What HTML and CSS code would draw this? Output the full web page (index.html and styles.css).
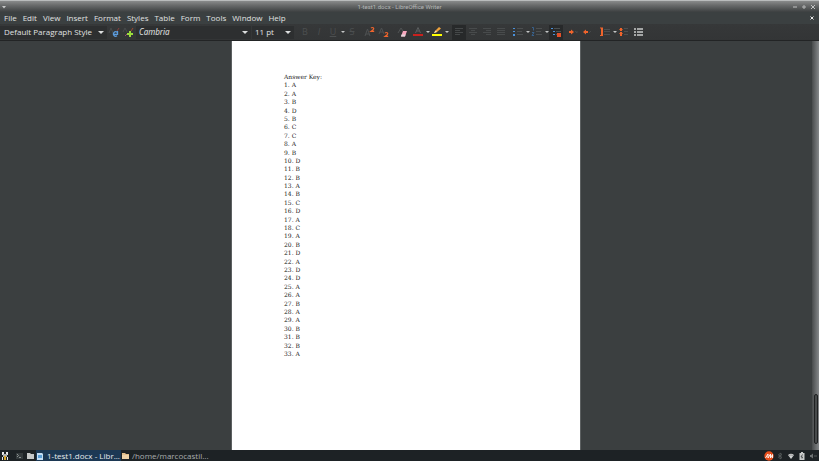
FILE: index.html
```
<!DOCTYPE html>
<html lang="en">
<head>
<meta charset="utf-8">
<title>1-test1.docx - LibreOffice Writer</title>
<link rel="stylesheet" href="styles.css">
</head>
<body>
<header class="titlebar">
  <button class="win" aria-label="Window menu"><svg width="6" height="6" viewBox="0 0 6 6"><path d="M1 2h4L3 4.500z" fill="#c8caca"/></svg></button>
  <h1 class="title">1-test1.docx - LibreOffice Writer</h1>
  <div class="win-group">
    <button class="win" aria-label="Minimize"><svg width="6" height="6" viewBox="0 0 6 6"><path d="M1 3h4" stroke="#c0c2c2"/></svg></button>
    <button class="win" aria-label="Maximize"><svg width="6" height="6" viewBox="0 0 6 6"><path d="M1 3h4M3 1v4" stroke="#b4b6b6"/></svg></button>
    <button class="win" aria-label="Close"><svg width="6" height="6" viewBox="0 0 6 6"><path d="M1 1l4 4M5 1L1 5" stroke="#c0c2c2"/></svg></button>
  </div>
</header>
<nav class="menubar">
  <button>File</button><button>Edit</button><button>View</button><button>Insert</button><button>Format</button><button>Styles</button><button>Table</button><button>Form</button><button>Tools</button><button>Window</button><button>Help</button>
  <button class="doc-close" aria-label="Close document"><svg width="4" height="4" viewBox="0 0 4 4"><path d="M.5.5l3 3M3.500.5l-3 3" stroke="#e8e8e8"/></svg></button>
</nav>
<div class="toolbar" role="toolbar" aria-label="Formatting">
  <div class="combo combo-style"><select aria-label="Paragraph style"><option>Default Paragraph Style</option></select></div>
  <div class="group">
    <button class="tool" aria-label="Update style"><svg width="12" height="12" viewBox="0 0 12 12"><path d="M1 7l2-5 2 5" stroke="#484b4c" fill="none"/><path d="M11 2L9 5" stroke="#8a3f3a"/><path d="M9 6.300A2.200 2.200 0 1 0 9 9.700M5.500 8.300h4V5" stroke="#5b9bdc" stroke-width="1.300" fill="none"/></svg></button>
    <button class="tool" aria-label="New style"><svg width="12" height="12" viewBox="0 0 12 12"><path d="M1 6l2-4 2 4" stroke="#484b4c" fill="none"/><path d="M11 2L9 5" stroke="#a04a2f"/><path d="M3 10l2-2" stroke="#9b4b78"/><path d="M7 5h2v2h2v2H9v2H7V9H5V7h2z" fill="#9adb3c"/></svg></button>
  </div>
  <div class="combo combo-font"><select aria-label="Font name"><option>Cambria</option></select></div>
  <div class="combo combo-size"><select aria-label="Font size"><option>11 pt</option></select></div>
  <div class="group group-text">
    <button class="tool letter bold" aria-label="Bold">B</button>
    <button class="tool letter italic" aria-label="Italic">I</button>
    <button class="tool letter under" aria-label="Underline">U</button>
    <button class="drop" aria-label="Underline options"></button>
    <button class="tool letter strike" aria-label="Strikethrough">S</button>
  </div>
  <div class="group group-script">
    <button class="tool" aria-label="Superscript"><svg width="12" height="12" viewBox="0 0 12 12"><path d="M1 10l2.500-7L6 10M2 8h3" stroke="#4e5152" fill="none"/><path d="M7 2q1.500-1 2.500 0T7.200 5.300h3" stroke="#f0642c" stroke-width="1.200" fill="none"/></svg></button>
    <button class="tool" aria-label="Subscript"><svg width="12" height="12" viewBox="0 0 12 12"><path d="M1 8l2.500-6L6 8M2 6h3" stroke="#4e5152" fill="none"/><path d="M7 7q1.500-1 2.500 0t-2.300 3.300h3" stroke="#f0642c" stroke-width="1.200" fill="none"/></svg></button>
  </div>
  <div class="group group-clear">
    <button class="tool" aria-label="Clear formatting"><svg width="12" height="12" viewBox="0 0 12 12"><path d="M1 7l3-5 2 3" stroke="#505354" fill="none"/><path d="M6 5h4L8 10.500H4z" fill="#f7a6bd"/><path d="M4.500 8.500H8.500L8 10.500H4z" fill="#e3d5dc"/></svg></button>
  </div>
  <div class="group group-color">
    <button class="tool" aria-label="Font color"><svg width="12" height="12" viewBox="0 0 12 12"><path d="M3.500 7L6 1.500 8.500 7M4.500 5h3" stroke="#5c5f60" fill="none"/><path d="M1 8h10v2H1z" fill="#c9211e"/></svg></button>
    <button class="drop" aria-label="Font color options"></button>
    <button class="tool" aria-label="Highlighting"><svg width="12" height="12" viewBox="0 0 12 12"><path d="M3 7l1-2 4-4 2 1.500L6 6z" fill="#f0a33c"/><path d="M3 7l1.500-2.500L6 6z" fill="#f6e3b0"/><path d="M1 8h10v2H1z" fill="#ffff00"/></svg></button>
    <button class="drop" aria-label="Highlighting options"></button>
  </div>
  <div class="group group-align">
    <button class="tool pressed" aria-label="Align left"><svg width="12" height="12" viewBox="0 0 12 12"><path d="M2 2.500h8M2 4.500h5M2 6.500h8M2 8.500h5" stroke="#454849"/></svg></button>
    <button class="tool" aria-label="Align center"><svg width="12" height="12" viewBox="0 0 12 12"><path d="M2 2.500h8M4 4.500h4M2 6.500h8M4 8.500h4" stroke="#484b4c"/></svg></button>
    <button class="tool" aria-label="Align right"><svg width="12" height="12" viewBox="0 0 12 12"><path d="M2 2.500h8M5 4.500h5M2 6.500h8M5 8.500h5" stroke="#484b4c"/></svg></button>
    <button class="tool" aria-label="Justify"><svg width="12" height="12" viewBox="0 0 12 12"><path d="M2 2.500h8M2 4.500h8M2 6.500h8M2 8.500h8" stroke="#484b4c"/></svg></button>
  </div>
  <div class="group group-list">
    <button class="tool" aria-label="Bullets"><svg width="12" height="12" viewBox="0 0 12 12"><path d="M5 2.500h6M5 5.500h5M5 8.500h6" stroke="#4c4f50"/><path d="M1 2h2v1H1zM1 5h2v1H1zM1 8h2v2H1z" fill="#4a90d9"/></svg></button>
    <button class="drop" aria-label="Bullet options"></button>
    <button class="tool" aria-label="Numbering"><svg width="12" height="12" viewBox="0 0 12 12"><path d="M5 2.500h6M5 5.500h5M5 8.500h6" stroke="#4c4f50"/><path d="M1 1.500h1.500v3M1 6.500h2L1 9.500h2" stroke="#38618c" fill="none"/></svg></button>
    <button class="drop" aria-label="Numbering options"></button>
    <button class="tool pressed" aria-label="Outline format"><svg width="12" height="12" viewBox="0 0 12 12"><path d="M4 2.500h6M6 5.500h5M6 8.500h4" stroke="#4c5051"/><path d="M1 2h2v1H1zM3 5h2v1H3zM3 8h2v1H3z" fill="#4a90d9"/><path d="M7 7h4v4H7z" fill="#e2502a"/></svg></button>
  </div>
  <div class="group group-indent">
    <button class="tool" aria-label="Increase indent"><svg width="12" height="12" viewBox="0 0 12 12"><path d="M3 5h2V3.500L8 6 5 8.500V7H3z" fill="#f0642c"/><path d="M9 5l2 2M11 5v2" stroke="#46494a"/></svg></button>
    <button class="tool" aria-label="Decrease indent"><svg width="12" height="12" viewBox="0 0 12 12"><path d="M8 5H6V3.500L3 6l3 2.500V7h2z" fill="#f0642c"/><path d="M9 7l2-2" stroke="#46494a"/></svg></button>
  </div>
  <div class="group group-spacing">
    <button class="tool" aria-label="Line spacing"><svg width="12" height="12" viewBox="0 0 12 12"><path d="M5 3.500h6M5 5.500h6M5 8.500h6" stroke="#4c4f50"/><path d="M1 2h3M1 9.500h3" stroke="#f0642c"/><path d="M2 2h2v8H2z" fill="#f0642c"/></svg></button>
    <button class="drop" aria-label="Line spacing options"></button>
    <button class="tool" aria-label="Increase paragraph spacing"><svg width="12" height="12" viewBox="0 0 12 12"><path d="M6 2.500h4M6 5.500h4M6 8.500h4" stroke="#4c4f50"/><path d="M2 2h2v3H2zM2 6h2v4H2z" fill="#f0642c"/><path d="M1 3.500h4M1 7.500h4" stroke="#f0642c" stroke-width=".6"/></svg></button>
    <button class="tool" aria-label="Select outline"><svg width="12" height="12" viewBox="0 0 12 12"><path d="M2 2h2v2H2zM2 5h2v2H2zM2 8h2v2H2zM5 2h6v2H5zM5 5h6v2H5zM5 8h6v2H5z" fill="#a4a6a6"/></svg></button>
  </div>
</div>
<main class="workspace">
  <article class="page">
    <p>Answer Key:</p>
    <p>1. A</p><p>2. A</p><p>3. B</p><p>4. D</p><p>5. B</p><p>6. C</p><p>7. C</p><p>8. A</p><p>9. B</p><p>10. D</p><p>11. B</p>
    <p>12. B</p><p>13. A</p><p>14. B</p><p>15. C</p><p>16. D</p><p>17. A</p><p>18. C</p><p>19. A</p><p>20. B</p><p>21. D</p><p>22. A</p>
    <p>23. D</p><p>24. D</p><p>25. A</p><p>26. A</p><p>27. B</p><p>28. A</p><p>29. A</p><p>30. B</p><p>31. B</p><p>32. B</p><p>33. A</p>
  </article>
  <div class="scrollbar"><div class="thumb"></div></div>
</main>
<footer class="taskbar">
  <button class="launch" aria-label="Applications"><svg width="10" height="10" viewBox="0 0 10 10"><path d="M2 1h2v3H2zM6 1h2v3H6zM2 6h1v3H2zM7 6h1v3H7z" fill="#e8e8e8"/><path d="M3 3h4v3H3z" fill="#b0b2b2"/><path d="M4 5h2v4H4z" fill="#d8a72c"/></svg></button>
  <button class="launch launch-term" aria-label="Terminal"><svg width="10" height="10" viewBox="0 0 10 10"><path d="M2 2h7v6H2z" fill="#343a3c"/><path d="M3 3l1.500 1.500L3 6M5 6.500h2" stroke="#a0a4a4" fill="none" stroke-width=".8"/></svg></button>
  <button class="launch" aria-label="Files"><svg width="10" height="10" viewBox="0 0 10 10"><path d="M2 2h3l1 1h3v5H2z" fill="#c6c8c8"/></svg></button>
  <button class="task active"><svg width="8" height="8" viewBox="0 0 8 8"><path d="M1 1h5l1 1v6H1z" fill="#c4def4"/><path d="M2 3h4v3H2z" fill="#5c9fd6"/></svg><span>1-test1.docx - Libr...</span></button>
  <button class="task"><svg width="8" height="8" viewBox="0 0 8 8"><path d="M1 1h3l1 1h3v5H1z" fill="#e2bd8b"/><path d="M1 3h7v4H1z" fill="#efd2a8"/></svg><span>/home/marcocastil...</span></button>
  <div class="tray">
    <svg width="10" height="10" viewBox="0 0 10 10"><circle cx="5" cy="5" r="4.700" fill="#e84e1b"/><path d="M1.500 7L4 3v4l2.500-4v4M6.500 7L8.500 3.500V7" stroke="#fff" fill="none" stroke-width=".9"/></svg>
    <svg width="10" height="10" viewBox="0 0 10 10"><path d="M3 3.500l4 3-2 1.500V2l2 1.500-4 3" stroke="#535859" fill="none"/></svg>
    <svg width="10" height="10" viewBox="0 0 10 10"><path d="M2 4q3-2.500 6 0L5 8z" fill="#d0d2d2"/><path d="M3 4.500q2-1 4 0" stroke="#777" fill="none" stroke-width=".6"/></svg>
    <svg width="10" height="10" viewBox="0 0 10 10"><path d="M4 1h2v1h1.500v7h-5V2H4z" fill="#c8caca"/><path d="M5.500 3.500L4 6h1.500L5 7.500" stroke="#33383a" fill="none" stroke-width=".8"/></svg>
    <svg width="10" height="10" viewBox="0 0 10 10"><path d="M2 4h1l2-1.500v5L3 6H2z" fill="#6c7071"/><path d="M6 5h3" stroke="#54595a"/></svg>
  </div>
</footer>
</body>
</html>
```
FILE: styles.css
```
* { box-sizing: border-box; }
body {
  margin: 0;
  height: 100vh;
  display: flex;
  flex-direction: column;
  background: #3b3f40;
  color: #e0e2e2;
  font: 8px/12px "Open Sans", "Noto Sans", sans-serif;
  overflow: hidden;
}
button {
  margin: 0;
  padding: 0;
  border: 0;
  background: none;
  color: inherit;
  font: inherit;
}
svg { display: block; flex: none; }

.titlebar {
  display: flex;
  align-items: center;
  flex: none;
  height: 12px;
  padding: 0 3px 0 1px;
  border-top: 1px solid #b9bcbc;
  background: linear-gradient(#898b8b, #686a6a 40%, #3d4041);
}
.title {
  flex: 1;
  margin: 0;
  text-align: center;
  font-family: Roboto, sans-serif;
  font-size: 6px;
  line-height: 11px;
  font-weight: 400;
  color: #b5b7b7;
}
.win-group { display: flex; gap: 3px; }

.menubar {
  display: flex;
  align-items: center;
  flex: none;
  gap: 6px;
  height: 12px;
  padding: 0 5px 0 4px;
  background: #3b4041;
}
.menubar button { line-height: 10px; }
.doc-close { margin-left: auto; }

.toolbar {
  display: flex;
  align-items: center;
  flex: none;
  height: 17px;
  border-bottom: 1px solid #222425;
  background: linear-gradient(#363839, #333536);
}
.combo {
  position: relative;
  flex: none;
  height: 13px;
  background: #2d2f30;
}
.combo select {
  display: block;
  width: 100%;
  height: 13px;
  margin: 0;
  padding: 0 0 0 3px;
  border: 0;
  appearance: none;
  background: none;
  color: inherit;
  font: inherit;
}
.combo::after {
  content: "";
  position: absolute;
  right: 3px;
  top: 5px;
  border: 3px solid transparent;
  border-top-color: #dcdede;
  border-bottom: 0;
  pointer-events: none;
}
.combo-style { width: 107px; }
.combo-style select { padding-left: 4px; }
.combo-font { width: 115px; margin-left: 1px; }
.combo-font select { font-family: "Noto Sans", sans-serif; font-style: italic; }
.combo-size { width: 42px; margin-left: 1px; }

.group { display: flex; align-items: center; flex: none; }
.tool {
  display: grid;
  place-items: center;
  width: 14px;
  height: 15px;
}
.pressed { background: #27292a; }
.drop { width: 5px; height: 15px; display: grid; place-items: center; }
.drop::before {
  content: "";
  border: 2px solid transparent;
  border-top-color: #c4c6c6;
  border-bottom: 0;
}
.letter { color: #4c4f50; font-size: 9px; }
.italic { font-style: italic; }
.under { text-decoration: underline; }
.strike { text-decoration: line-through; }
.group-text { margin-left: 4px; }
.group-script { margin-left: 4px; }
.group-clear { margin-left: 5px; }
.group-color { margin-left: 1px; }
.group-align { margin-left: 3px; }
.group-list { margin-left: 3px; }
.group-indent { margin-left: 2px; }
.group-spacing { margin-left: 5px; }

.workspace {
  flex: 1;
  min-height: 0;
  display: flex;
  justify-content: center;
  background: #3b3f40;
}
.page {
  width: 350px;
  margin: 0 auto;
  padding: 32px 52px;
  border: solid #5c6061;
  border-width: 0 1px;
  background: #fff;
  color: #222;
  font: 6px/1.4 "DejaVu Serif", serif;
}
.page p { margin: 0; }
.scrollbar {
  flex: none;
  display: flex;
  flex-direction: column;
  justify-content: flex-end;
  width: 7px;
  padding: 0 1px 6px 2px;
  background: linear-gradient(90deg, #484b4c, #85888a);
}
.thumb {
  height: 50px;
  border: 1px solid #1f2122;
  border-radius: 2px;
  background: #484b4c;
}

.taskbar {
  display: flex;
  align-items: center;
  flex: none;
  height: 11px;
  background: #1d2225;
}
.launch { width: 11px; }
.launch-term { margin-left: 3px; }
.task {
  display: flex;
  align-items: center;
  gap: 3px;
  width: 85px;
  height: 11px;
  line-height: 11px;
  color: #a9adae;
}
.active { background: #1c3854; color: #e6eaec; }
.tray { display: flex; gap: 1px; margin-left: auto; padding-right: 1px; }
```
